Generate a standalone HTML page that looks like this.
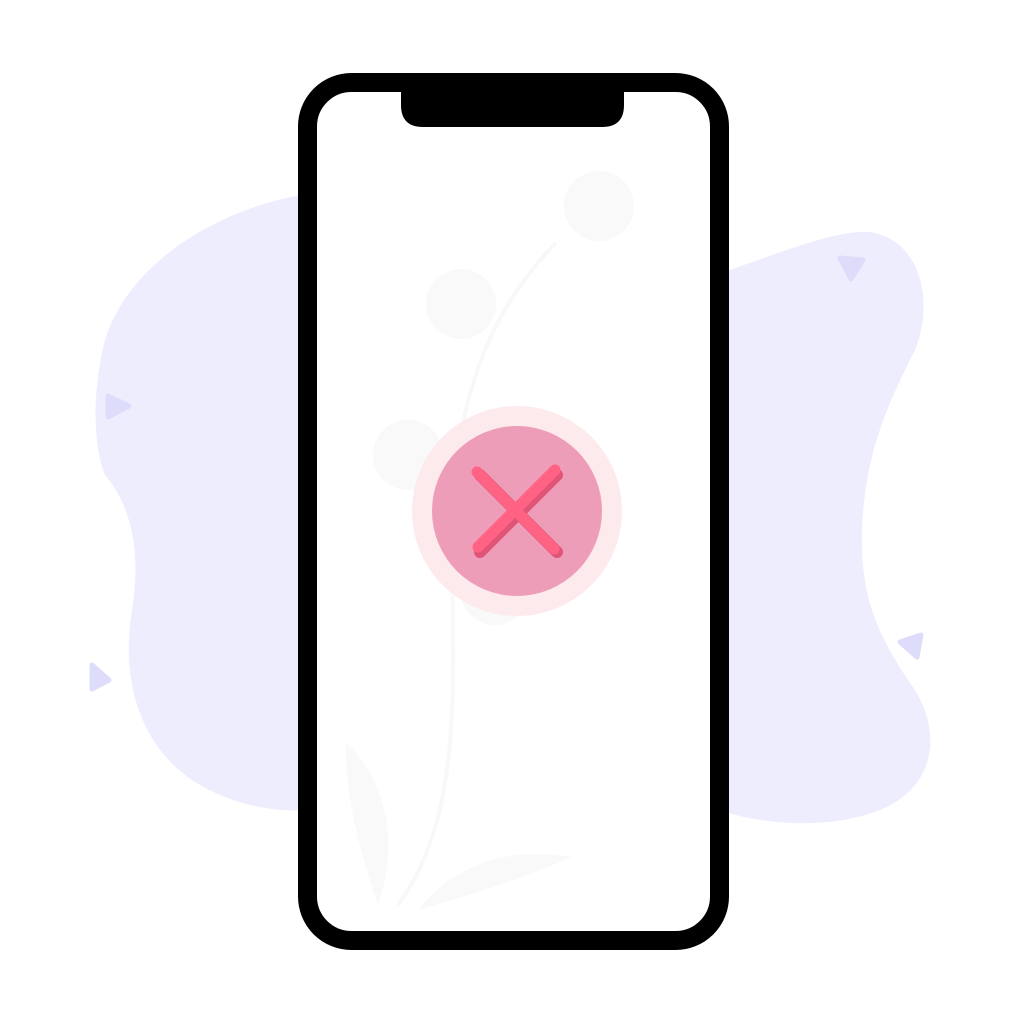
<!DOCTYPE html>
<html><head><style>html,body{margin:0;padding:0;background:#fff;width:1024px;height:1024px;overflow:hidden}</style></head>
<body>
<svg width="1024" height="1024" viewBox="0 0 1024 1024" xmlns="http://www.w3.org/2000/svg">
<path d="M300 195 C220 210 130 260 105 340 C90 400 95 450 105 475 C135 510 140 560 132 610 C120 680 140 750 200 785 C240 808 280 812 310 810 L720 810 C760 825 830 830 880 810 C930 790 945 740 915 690 C880 640 860 600 862 530 C865 450 890 400 915 350 C935 300 920 240 870 232 C840 230 800 245 730 270 L300 270 Z" fill="#eeedfd"/>
<g fill="#dedcfb" stroke="#dedcfb" stroke-width="5" stroke-linejoin="round">
<path d="M840 258 L863 260 L851 279 Z"/>
<path d="M108 396 L129 406 L108 417 Z"/>
<path d="M92 665 L109 680 L92 689 Z"/>
<path d="M900 642 L921 635 L917 657 Z"/>
</g>
<rect x="307.5" y="82.5" width="412" height="858" rx="44" fill="#fff" stroke="#000" stroke-width="19"/>
<path d="M401 92 L624 92 L624 105 Q624 127 602 127 L423 127 Q401 127 401 105 Z" fill="#000"/>
<g fill="#f9f9f9">
<circle cx="599" cy="206" r="35"/><circle cx="461" cy="304" r="35"/><circle cx="408" cy="455" r="35"/><circle cx="495" cy="590" r="35"/>
</g>
<path d="M556 243 C480 320 450 420 452 560 C454 700 460 820 398 905" fill="none" stroke="#f8f8f8" stroke-width="4"/>
<path d="M346 742 C385 780 400 840 378 905 C360 850 345 800 346 742 Z" fill="#f9f9f9"/>
<path d="M418 910 C450 870 500 845 572 857 C520 880 470 895 418 910 Z" fill="#f9f9f9"/>
<circle cx="517" cy="511" r="105" fill="#fde9ec" opacity="0.95"/>
<circle cx="517" cy="511" r="85" fill="#ee9db8"/>
<g stroke="#e05478" stroke-width="12" stroke-linecap="round"><line x1="480" y1="475" x2="557" y2="552"/><line x1="557" y1="475" x2="480" y2="552"/></g>
<g stroke="#ff6283" stroke-width="11" stroke-linecap="round"><line x1="477" y1="472" x2="554" y2="549"/><line x1="555" y1="470" x2="478" y2="547"/></g>
</svg>
</body></html>
